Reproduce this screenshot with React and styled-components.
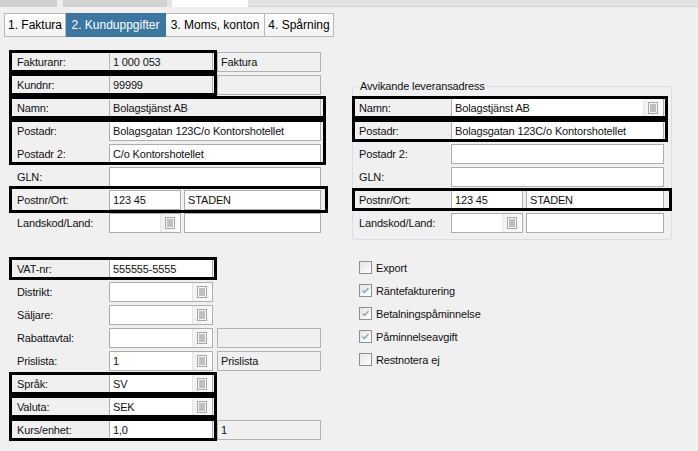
import React from 'react';
import styled, { createGlobalStyle } from 'styled-components';

const GlobalStyle = createGlobalStyle`
  html, body {
    margin: 0;
    background: #f0f0f0;
  }
  body {
    font-family: "Liberation Sans", Arial, sans-serif;
    font-size: 11px;
    letter-spacing: -0.15px;
    color: #111;
  }
`;

const Page = styled.div`
  width: 698px;
  height: 451px;
  overflow: hidden;
  background: #f0f0f0;
`;

const TopStrip = styled.div`
  display: flex;
  height: 7px;
`;

const StripPiece = styled.div`
  width: ${(p) => p.$w}px;
  flex: ${(p) => (p.$grow ? 1 : 'none')};
  background: ${(p) => p.$bg};
  border-bottom: 1px solid ${(p) => p.$line || 'transparent'};
  box-sizing: border-box;
`;

const TabBar = styled.div`
  display: flex;
  margin: 6px 0 0 4px;
  height: 24px;
`;

const Tab = styled.div`
  box-sizing: border-box;
  height: 24px;
  width: ${(p) => p.$w}px;
  display: flex;
  align-items: center;
  justify-content: center;
  font-size: 12px;
  letter-spacing: 0;
  color: ${(p) => (p.$active ? '#fff' : '#000')};
  background: ${(p) => (p.$active ? '#3b77a0' : 'linear-gradient(#ffffff, #f3f3f3)')};
  border: 1px solid ${(p) => (p.$active ? '#3b77a0' : '#b9b9b9')};
  border-left-width: ${(p) => (p.$first ? 1 : 0)}px;
`;

const Body = styled.div`
  display: flex;
  padding: 13px 0 0 9px;
`;

const LeftCol = styled.div`
  width: 330px;
  display: flex;
  flex-direction: column;
`;

const RightCol = styled.div`
  margin-left: 13px;
  padding-top: 30px;
  display: flex;
  flex-direction: column;
`;

const Spacer = styled.div`
  height: 23px;
`;

const Boxed = styled.div`
  position: relative;
  &::after {
    content: '';
    position: absolute;
    left: ${(p) => p.$left || 0}px;
    top: ${(p) => p.$top || 0}px;
    bottom: ${(p) => p.$bottom || 0}px;
    width: ${(p) => p.$w}px;
    border: 3px solid #000;
    box-sizing: border-box;
    pointer-events: none;
    z-index: 2;
  }
`;

const Row = styled.div`
  display: flex;
  align-items: center;
  height: 23px;
`;

const Label = styled.div`
  box-sizing: border-box;
  flex: none;
  width: ${(p) => p.$w}px;
  padding-left: ${(p) => p.$pl}px;
  white-space: nowrap;
`;

const Field = styled.div`
  box-sizing: border-box;
  flex: none;
  display: flex;
  align-items: center;
  height: 20px;
  width: ${(p) => p.$w}px;
  margin-left: ${(p) => p.$ml || 0}px;
  border: 1px solid ${(p) => (p.$ro ? '#b3b3b3' : '#abadb3')};
  background: ${(p) => (p.$ro ? '#f0f0f0' : '#fff')};
  padding-left: 3px;
  white-space: nowrap;
  overflow: hidden;
`;

const FieldText = styled.span`
  flex: 1;
`;

const LookupBtn = styled.div`
  flex: none;
  width: 18px;
  height: 18px;
  display: flex;
  align-items: center;
  justify-content: center;
  border-left: 1px solid #e6e6e6;
  background: linear-gradient(90deg, #f2f2f2, #fafafa);
`;

const GroupBox = styled.fieldset`
  margin: 0;
  padding: 4px 0 5px 0;
  width: 320px;
  box-sizing: border-box;
  border: 1px solid #d5dfe5;
  border-radius: 3px;
  min-width: 0;
`;

const Legend = styled.legend`
  margin-left: 5px;
  padding: 0 2px;
  font-size: 11px;
  color: #111;
`;

const CheckList = styled.div`
  margin-top: 16px;
  display: flex;
  flex-direction: column;
`;

const CheckRow = styled.div`
  display: flex;
  align-items: center;
  height: 23px;
  padding-left: 7px;
  gap: 4px;
`;

const Box = styled.div`
  width: 13px;
  height: 13px;
  box-sizing: border-box;
  border: 1px solid #8e8f8f;
  background: linear-gradient(135deg, #e4e4e4, #ffffff);
  display: flex;
  align-items: center;
  justify-content: center;
`;

const LookupIcon = () => (
  <svg width="10" height="12" viewBox="0 0 10 12">
    <rect x="0.5" y="0.5" width="9" height="11" fill="#f4f4f4" stroke="#a6a6a6" />
    <line x1="2" y1="3" x2="8" y2="3" stroke="#8a8a8a" />
    <line x1="2" y1="5" x2="8" y2="5" stroke="#8a8a8a" />
    <line x1="2" y1="7" x2="8" y2="7" stroke="#8a8a8a" />
    <line x1="2" y1="9" x2="8" y2="9" stroke="#8a8a8a" />
  </svg>
);

const Lookup = ({ w, value, ml }) => (
  <Field $w={w} $ml={ml} style={{ paddingRight: 1 }}>
    <FieldText>{value}</FieldText>
    <LookupBtn>
      <LookupIcon />
    </LookupBtn>
  </Field>
);

const Check = ({ checked, children }) => (
  <CheckRow>
    <Box>
      {checked && (
        <svg width="9" height="9" viewBox="0 0 9 9">
          <polyline points="1.5,4.5 3.5,6.5 7.5,2" fill="none" stroke="#8aa4bf" strokeWidth="1.5" />
        </svg>
      )}
    </Box>
    <span>{children}</span>
  </CheckRow>
);

const L = ({ children }) => (
  <Label $w={100} $pl={8}>
    {children}
  </Label>
);

const R = ({ children }) => (
  <Label $w={98} $pl={6}>
    {children}
  </Label>
);

export default function App() {
  return (
    <Page>
      <GlobalStyle />
      <TopStrip>
        <StripPiece $w={57} $bg="#cfcfcf" />
        <StripPiece $w={6} $bg="#f0f0f0" />
        <StripPiece $w={104} $bg="#d3d3d3" />
        <StripPiece $w={5} $bg="#e6e6e6" />
        <StripPiece $w={76} $bg="#ffffff" />
        <StripPiece $grow $bg="#e3e3e3" $line="#d2d2d2" />
      </TopStrip>

      <TabBar>
        <Tab $w={62} $first>1. Faktura</Tab>
        <Tab $w={100} $active>2. Kunduppgifter</Tab>
        <Tab $w={99}>3. Moms, konton</Tab>
        <Tab $w={69}>4. Spårning</Tab>
      </TabBar>

      <Body>
        <LeftCol>
          <Boxed $w={208}>
            <Row>
              <L>Fakturanr:</L>
              <Field $w={104} $ro>1 000 053</Field>
              <Field $w={104} $ml={4} $ro>Faktura</Field>
            </Row>
          </Boxed>
          <Boxed $w={208}>
            <Row>
              <L>Kundnr:</L>
              <Field $w={104} $ro>99999</Field>
              <Field $w={104} $ml={4} $ro />
            </Row>
          </Boxed>
          <Boxed $w={317}>
            <Row>
              <L>Namn:</L>
              <Field $w={212} $ro>Bolagstjänst AB</Field>
            </Row>
          </Boxed>
          <Boxed $w={317}>
            <Row>
              <L>Postadr:</L>
              <Field $w={212}>Bolagsgatan 123C/o Kontorshotellet</Field>
            </Row>
            <Row>
              <L>Postadr 2:</L>
              <Field $w={212}>C/o Kontorshotellet</Field>
            </Row>
          </Boxed>
          <Row>
            <L>GLN:</L>
            <Field $w={212} />
          </Row>
          <Boxed $w={319} $top={-2} $bottom={-2}>
            <Row>
              <L>Postnr/Ort:</L>
              <Field $w={72}>123 45</Field>
              <Field $w={137} $ml={3}>STADEN</Field>
            </Row>
          </Boxed>
          <Row>
            <L>Landskod/Land:</L>
            <Lookup w={72} />
            <Field $w={137} $ml={3} />
          </Row>

          <Spacer />

          <Boxed $w={208}>
            <Row>
              <L>VAT-nr:</L>
              <Field $w={104}>555555-5555</Field>
            </Row>
          </Boxed>
          <Row>
            <L>Distrikt:</L>
            <Lookup w={104} />
          </Row>
          <Row>
            <L>Säljare:</L>
            <Lookup w={104} />
          </Row>
          <Row>
            <L>Rabattavtal:</L>
            <Lookup w={104} />
            <Field $w={104} $ml={4} $ro />
          </Row>
          <Row>
            <L>Prislista:</L>
            <Lookup w={104} value="1" />
            <Field $w={104} $ml={4} $ro>Prislista</Field>
          </Row>
          <Boxed $w={208}>
            <Row>
              <L>Språk:</L>
              <Lookup w={104} value="SV" />
            </Row>
          </Boxed>
          <Boxed $w={208}>
            <Row>
              <L>Valuta:</L>
              <Lookup w={104} value="SEK" />
            </Row>
          </Boxed>
          <Boxed $w={208}>
            <Row>
              <L>Kurs/enhet:</L>
              <Field $w={104}>1,0</Field>
              <Field $w={104} $ml={4} $ro>1</Field>
            </Row>
          </Boxed>
        </LeftCol>

        <RightCol>
          <GroupBox>
            <Legend>Avvikande leveransadress</Legend>
            <Boxed $w={316} $left={-1}>
              <Row>
                <R>Namn:</R>
                <Lookup w={213} value="Bolagstjänst AB" />
              </Row>
            </Boxed>
            <Boxed $w={316} $left={-1}>
              <Row>
                <R>Postadr:</R>
                <Field $w={213}>Bolagsgatan 123C/o Kontorshotellet</Field>
              </Row>
            </Boxed>
            <Row>
              <R>Postadr 2:</R>
              <Field $w={213} />
            </Row>
            <Row>
              <R>GLN:</R>
              <Field $w={213} />
            </Row>
            <Boxed $w={320} $left={-1}>
              <Row>
                <R>Postnr/Ort:</R>
                <Field $w={72}>123 45</Field>
                <Field $w={138} $ml={3}>STADEN</Field>
              </Row>
            </Boxed>
            <Row>
              <R>Landskod/Land:</R>
              <Lookup w={72} />
              <Field $w={138} $ml={3} />
            </Row>
          </GroupBox>

          <CheckList>
            <Check>Export</Check>
            <Check checked>Räntefakturering</Check>
            <Check checked>Betalningspåminnelse</Check>
            <Check checked>Påminnelseavgift</Check>
            <Check>Restnotera ej</Check>
          </CheckList>
        </RightCol>
      </Body>
    </Page>
  );
}
